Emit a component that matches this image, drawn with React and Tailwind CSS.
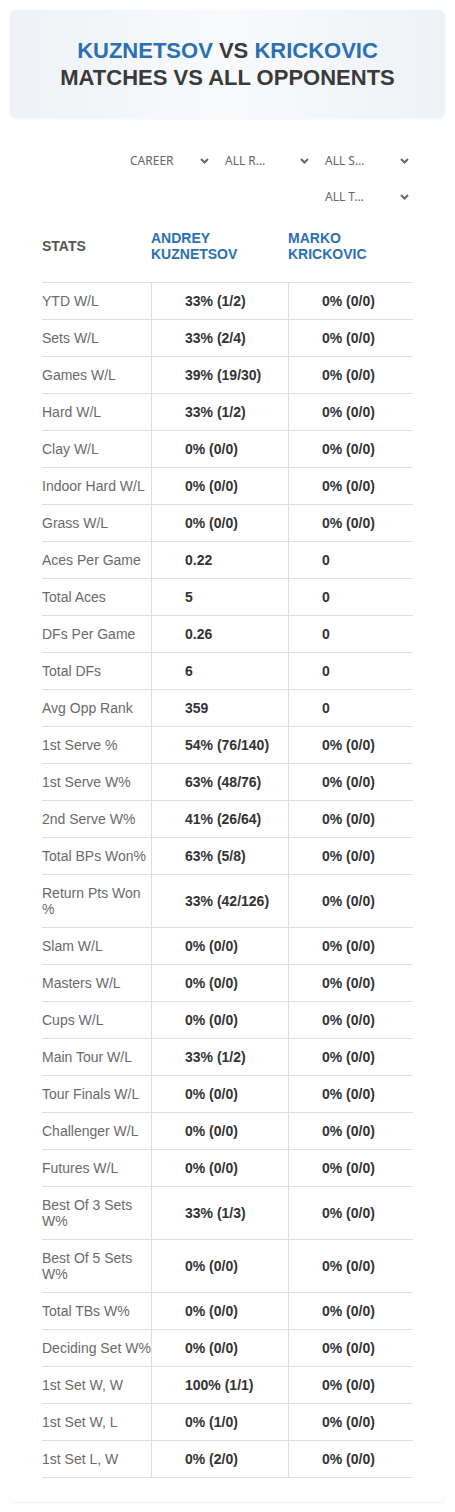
import React from 'react'

const rows = [
    ['YTD W/L', '33% (1/2)', '0% (0/0)'],
    ['Sets W/L', '33% (2/4)', '0% (0/0)'],
    ['Games W/L', '39% (19/30)', '0% (0/0)'],
    ['Hard W/L', '33% (1/2)', '0% (0/0)'],
    ['Clay W/L', '0% (0/0)', '0% (0/0)'],
    ['Indoor Hard W/L', '0% (0/0)', '0% (0/0)'],
    ['Grass W/L', '0% (0/0)', '0% (0/0)'],
    ['Aces Per Game', '0.22', '0'],
    ['Total Aces', '5', '0'],
    ['DFs Per Game', '0.26', '0'],
    ['Total DFs', '6', '0'],
    ['Avg Opp Rank', '359', '0'],
    ['1st Serve %', '54% (76/140)', '0% (0/0)'],
    ['1st Serve W%', '63% (48/76)', '0% (0/0)'],
    ['2nd Serve W%', '41% (26/64)', '0% (0/0)'],
    ['Total BPs Won%', '63% (5/8)', '0% (0/0)'],
    ['Return Pts Won %', '33% (42/126)', '0% (0/0)'],
    ['Slam W/L', '0% (0/0)', '0% (0/0)'],
    ['Masters W/L', '0% (0/0)', '0% (0/0)'],
    ['Cups W/L', '0% (0/0)', '0% (0/0)'],
    ['Main Tour W/L', '33% (1/2)', '0% (0/0)'],
    ['Tour Finals W/L', '0% (0/0)', '0% (0/0)'],
    ['Challenger W/L', '0% (0/0)', '0% (0/0)'],
    ['Futures W/L', '0% (0/0)', '0% (0/0)'],
    ['Best Of 3 Sets W%', '33% (1/3)', '0% (0/0)'],
    ['Best Of 5 Sets W%', '0% (0/0)', '0% (0/0)'],
    ['Total TBs W%', '0% (0/0)', '0% (0/0)'],
    ['Deciding Set W%', '0% (0/0)', '0% (0/0)'],
    ['1st Set W, W', '100% (1/1)', '0% (0/0)'],
    ['1st Set W, L', '0% (1/0)', '0% (0/0)'],
    ['1st Set L, W', '0% (2/0)', '0% (0/0)'],
]

// Select-looking filter with a chevron on the right
const Filter = ({label, className = ''}) => (
    <div className={`flex items-center justify-between w-[90px] h-9 pr-1 text-[12px] text-[#666] font-['Noto_Sans',sans-serif] ${className}`}>
        <span>{label}</span>
        <svg width="9" height="6" viewBox="0 0 9 6" fill="none">
            <polyline points="1,1 4.5,4.5 8,1" stroke="#666" strokeWidth="2" />
        </svg>
    </div>
)

const App = () => {
    return (
        <div className="min-h-[1512px] bg-white px-[10px] pt-[10px] font-['Liberation_Sans',Arial,sans-serif]">
            {/* Title card */}
            <div className="h-[108px] rounded-md bg-gradient-to-r from-[#eef2f6] via-[#f9fafc] to-[#eef2f6] shadow-[0_1px_3px_rgba(0,0,0,0.05)] flex flex-col items-center justify-center text-[22px] leading-[27px] font-bold text-[#3a3a3a]">
                <div>
                    <span className="text-[#2a70b3]">KUZNETSOV</span> VS <span className="text-[#2a70b3]">KRICKOVIC</span>
                </div>
                <div>MATCHES VS ALL OPPONENTS</div>
            </div>

            {/* Stats card */}
            <div className="mt-[11px] rounded-md bg-white shadow-[0_1px_2px_rgba(0,0,0,0.06)] px-8 pt-[14px] pb-6">
                <div className="flex flex-wrap justify-end gap-x-[10px]">
                    <Filter label="CAREER" className="pl-[7px]" />
                    <Filter label="ALL R…" className="pl-0.5" />
                    <Filter label="ALL S…" className="pl-0.5" />
                    <Filter label="ALL T…" className="pl-0.5" />
                </div>

                <div className="grid grid-cols-[109px_137px_125px] text-[14px] leading-4">
                    {/* Header */}
                    <div className="h-[68px] pb-[5px] flex items-center border-b border-[#dedede] font-bold text-[#555]">STATS</div>
                    <div className="h-[68px] pb-[5px] flex items-center border-b border-[#dedede] font-bold text-[#2a70b3]">ANDREY<br />KUZNETSOV</div>
                    <div className="h-[68px] pb-[5px] flex items-center border-b border-[#dedede] font-bold text-[#2a70b3]">MARKO<br />KRICKOVIC</div>

                    {rows.map(([label, a, b]) => (
                        <React.Fragment key={label}>
                            <div className="py-[10px] flex items-center border-b border-[#dedede] text-[#6a6a6a]">{label}</div>
                            <div className="py-[10px] pl-[33px] flex items-center border-b border-l border-[#dedede] font-bold text-[#333]">{a}</div>
                            <div className="py-[10px] pl-[33px] flex items-center border-b border-l border-[#dedede] font-bold text-[#333]">{b}</div>
                        </React.Fragment>
                    ))}
                </div>
            </div>
        </div>
    )
}

export default App
